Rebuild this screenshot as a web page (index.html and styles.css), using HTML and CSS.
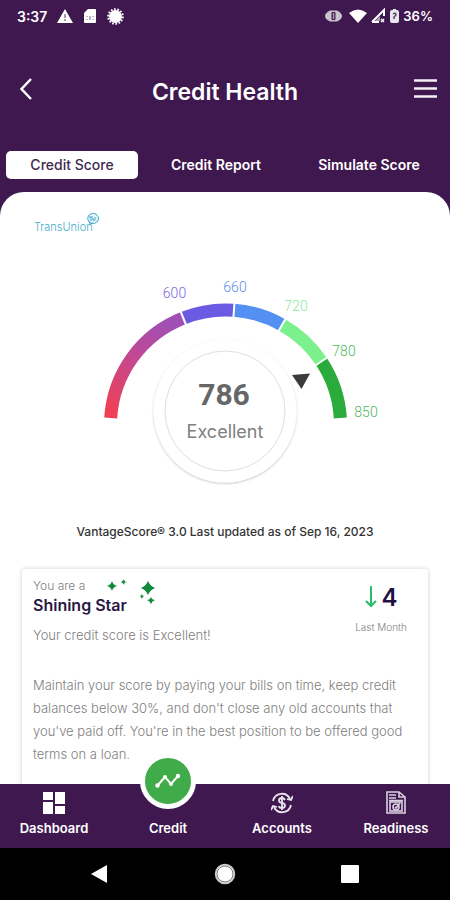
FILE: index.html
```html
<!DOCTYPE html>
<html lang="en">
<head>
    <meta charset="UTF-8">
    <meta name="viewport" content="width=device-width, initial-scale=1.0">
    <title>Credit Health</title>
    <link rel="stylesheet" href="styles.css">
</head>
<body>
    <header>
        <div class="status">
            <div class="status-group">
                <span class="time">3:37</span>
                <svg width="16" height="16" viewBox="0 0 16 16"><path d="M8 1L16 15H0Z" fill="#fff"/><path d="M8 6v4M8 11v2" stroke="#8a7a92" stroke-width="1.5"/></svg>
                <svg width="14" height="16" viewBox="0 0 14 16"><path d="M5 1h7q1 0 1 1v12q0 1-1 1H2q-1 0-1-1V5Z" fill="#fff"/><path d="M4 8v1M4 11v1M7 8v4M10 8v1M10 11v1" stroke="#7b6a86" stroke-width="1"/></svg>
                <svg width="17" height="17" viewBox="0 0 17 17"><circle cx="8.500" cy="8.500" r="6.500" fill="#fff"/><circle cx="8.500" cy="8.500" r="7.300" fill="none" stroke="#fff" stroke-width="2" stroke-dasharray="1.700 1.570"/></svg>
            </div>
            <div class="status-group right">
                <svg width="17" height="14" viewBox="0 0 17 14"><path d="M5 1.500h7v11H5Q0 10 0 7T5 1.500ZM12 1.500Q17 4 17 7T12 12.500" fill="#c9c0d0"/><rect x="6.500" y="3" width="4" height="8" rx="1" fill="#3f184f"/><rect x="7.800" y="4" width="1.500" height="6" fill="#a79bb0"/></svg>
                <svg class="wifi" width="18" height="14" viewBox="0 0 18 14"><path d="M0 4Q9-3 18 4L9 14Z" fill="#fff"/></svg>
                <svg width="16" height="16" viewBox="0 0 16 16"><path d="M2 14L14 2v6M2 14h7" fill="none" stroke="#fff" stroke-width="2"/><path d="M5 13L10 8v5Z" fill="#a79bb0"/><path d="M11 11l3 3M14 11l-3 3" stroke="#fff" stroke-width="1.500"/></svg>
                <svg width="11" height="16" viewBox="0 0 11 16"><path d="M4 1h3v1h1q2 0 2 2v9q0 2-2 2H3q-2 0-2-2V4q0-2 2-2h1Z" fill="#e9e5ec"/><path d="M4 6q3-2 3 1L5 9v2" fill="none" stroke="#5b4169" stroke-width="1.500"/></svg>
                <span class="battery">36%</span>
            </div>
        </div>
        <div class="title-bar">
            <button type="button" class="icon-btn back" aria-label="Back">
                <svg width="14" height="24" viewBox="0 0 14 24"><path d="M11 2L1.500 12L11 22" fill="none" stroke="#fff" stroke-width="2.500"/></svg>
            </button>
            <h1>Credit Health</h1>
            <button type="button" class="icon-btn" aria-label="Menu">
                <svg width="24" height="24" viewBox="0 0 24 24"><path d="M1 3.500h23M1 11.500h23M1 19.500h23" stroke="#f3f0f5" stroke-width="2.500"/></svg>
            </button>
        </div>
        <div class="tabs">
            <button type="button" class="tab active">Credit Score</button>
            <button type="button" class="tab">Credit Report</button>
            <button type="button" class="tab">Simulate Score</button>
        </div>
    </header>

    <main>
        <div class="logo">
            <span>TransUnion</span>
            <svg width="14" height="14" viewBox="0 0 14 14"><path d="M3 3Q6 0 10 2Q14 5 12 9Q9 13 4 11Q0 7 3 3Z" fill="#e4f4fa" stroke="#48aacd" stroke-width="1"/><path d="M3 5h4M5 5v4M7 6v2q1 1 2 0V5M3 9l1 3l3-1" fill="none" stroke="#48aacd" stroke-width="1"/></svg>
        </div>

        <svg class="gauge" width="300" height="220" viewBox="75 0 300 220">
            <defs>
                <linearGradient id="low" gradientUnits="userSpaceOnUse" x1="110" y1="148" x2="160" y2="50">
                    <stop offset="0" stop-color="#f43f50"/>
                    <stop offset="0.700" stop-color="#b94a9c"/>
                    <stop offset="1" stop-color="#a04fb4"/>
                </linearGradient>
                <filter id="soft" x="-20%" y="-20%" width="140%" height="140%">
                    <feDropShadow dx="0" dy="1" stdDeviation="1" flood-color="#000" flood-opacity="0.250"/>
                </filter>
            </defs>
            <g fill="none" stroke-width="13">
                <path d="M110.700 148A115 115 0 0 1 183.200 48.100" stroke="url(#low)"/>
                <path d="M183.200 48.100A115 115 0 0 1 233.900 40.300" stroke="#6a5be2"/>
                <path d="M233.900 40.300A115 115 0 0 1 282 54.800" stroke="#548ff2"/>
                <path d="M282 54.800A115 115 0 0 1 321.400 91.500" stroke="#7cf08c"/>
                <path d="M321.400 91.500A115 115 0 0 1 340.300 148" stroke="#2bab3c"/>
            </g>
            <path d="M180 40L186.500 56M234.500 32L233.400 48M286 48L278 62M328 87L314.500 96" stroke="#fff" stroke-width="2"/>
            <circle cx="225" cy="141" r="71.500" fill="#fff" filter="url(#soft)"/>
            <circle cx="225" cy="141" r="60" fill="#fff" stroke="#dedede"/>
            <path d="M292 105L310 103.500L301.500 119Z" fill="#3b3b3b"/>
            <g class="ticks" text-anchor="middle">
                <text x="174.500" y="28" fill="#7a68da">600</text>
                <text x="235" y="22" fill="#5b8deb">660</text>
                <text x="296" y="41" fill="#8bea99">720</text>
                <text x="344" y="86" fill="#4fb65e">780</text>
                <text x="366" y="147" fill="#4fb65e">850</text>
            </g>
            <text class="score" x="224" y="135" text-anchor="middle">786</text>
            <text class="rating" x="225" y="168" text-anchor="middle">Excellent</text>
        </svg>

        <p class="updated">VantageScore® 3.0 Last updated as of Sep 16, 2023</p>

        <section class="card">
            <div class="card-head">
                <div class="persona">
                    <p class="small">You are a</p>
                    <h2>Shining Star</h2>
                    <svg class="sparkles" width="48" height="26" viewBox="0 0 48 26" fill="#128a3c">
                        <path d="M5 2Q6 6 10 7Q6 8 5 12Q4 8 0 7Q4 6 5 2Z"/>
                        <path d="M17 0Q17 3 20 3Q17 3 17 6Q16 4 14 3Q16 2 17 0Z"/>
                        <path d="M41 2Q43 7 48 9Q43 11 41 16Q39 11 34 9Q39 7 41 2Z"/>
                        <path d="M35 15Q35 17 37 17Q35 18 35 20Q34 18 33 17Q34 17 35 15Z"/>
                        <path d="M44 18Q45 21 48 21Q45 22 44 25Q43 22 40 21Q43 21 44 18Z"/>
                    </svg>
                </div>
                <div class="change">
                    <div class="change-value">
                        <svg width="12" height="22" viewBox="0 0 12 22"><path d="M6 0v20M1 15l5 5l5-5" fill="none" stroke="#2dba6c" stroke-width="2"/></svg>
                        <span>4</span>
                    </div>
                    <p class="last">Last Month</p>
                </div>
            </div>
            <p class="text">Your credit score is Excellent!</p>
            <p class="text advice">Maintain your score by paying your bills on time, keep credit balances below 30%, and don't close any old accounts that you've paid off. You're in the best position to be offered good terms on a loan.</p>
        </section>
    </main>

    <nav>
        <a href="#dashboard">
            <svg width="22" height="22" viewBox="0 0 22 22"><path d="M0 0h10v8H0ZM12 0h10v12H12ZM0 10h10v12H0ZM12 14h10v8H12Z" fill="#fff"/></svg>
            <span>Dashboard</span>
        </a>
        <a href="#credit">
            <span class="bubble"><svg width="26" height="16" viewBox="0 0 26 16"><path d="M2 13L10 4L16 11L23 3" fill="none" stroke="#fff" stroke-width="2"/><g fill="#fff"><circle cx="2.500" cy="12.500" r="2.200"/><circle cx="10" cy="4" r="2"/><circle cx="16" cy="11" r="2"/><circle cx="23" cy="3" r="2.200"/></g></svg></span>
            <span>Credit</span>
        </a>
        <a href="#accounts">
            <svg width="22" height="22" viewBox="0 0 22 22" fill="none" stroke="#e9e4ee" stroke-width="1.800"><path d="M2 9A9 9 0 0 1 19 7M20 13A9 9 0 0 1 3 15"/><path d="M16 7l4 1l2-4M6 15l-4-1l-2 4"/><path d="M14 8Q13 6 11 6Q8 6 8 8.500Q8 10.500 11 11Q14 11.500 14 13.500Q14 16 11 16Q8 16 8 14M11 4v14"/></svg>
            <span>Accounts</span>
        </a>
        <a href="#readiness">
            <svg width="20" height="23" viewBox="0 0 20 23" fill="none" stroke="#d9d1e0" stroke-width="1.600"><path d="M1 1h12l6 5v16H1Z"/><path d="M13 1v5h6M3 4h7M3 7h7M3 9.500h14"/><rect x="4" y="11" width="12" height="9"/><circle cx="10" cy="16" r="3"/><path d="M9 16l1 1l4-5"/></svg>
            <span>Readiness</span>
        </a>
    </nav>

    <div class="system">
        <button type="button" aria-label="System back"><svg width="22" height="22" viewBox="0 0 22 22"><path d="M2 11L18 2V20Z" fill="#fff"/></svg></button>
        <button type="button" aria-label="Home"><svg width="22" height="22" viewBox="0 0 22 22"><circle cx="11" cy="11" r="9.500" fill="#fff" stroke="#c9c9c9" stroke-width="1.500"/><circle cx="11" cy="11" r="8" fill="none" stroke="#777" stroke-width="1"/></svg></button>
        <button type="button" aria-label="Recent apps"><svg width="22" height="22" viewBox="0 0 22 22"><rect x="2" y="2" width="18" height="18" rx="1" fill="#fff"/></svg></button>
    </div>
</body>
</html>
```
FILE: styles.css
```css
* {
    box-sizing: border-box;
}

body {
    margin: 0;
    height: 100vh;
    display: flex;
    flex-direction: column;
    background-color: #3f184f;
    font-family: Inter, "Liberation Sans", sans-serif;
    color: #808080;
}

h1, h2, p {
    margin: 0;
}

button {
    border: none;
    padding: 0;
    background: none;
    font-family: inherit;
    color: inherit;
}

svg {
    display: block;
    flex-shrink: 0;
}

header {
    color: #fff;
}

.status {
    display: flex;
    justify-content: space-between;
    align-items: center;
    height: 32px;
    padding: 0 17px;
}

.status-group {
    display: flex;
    align-items: center;
    gap: 10px;
}

.status-group.right {
    gap: 3px;
}

.wifi {
    margin-left: 4px;
}

.time, .battery {
    font-size: 14px;
    font-weight: 600;
}

.battery {
    font-size: 13px;
}

.title-bar {
    display: flex;
    justify-content: space-between;
    align-items: center;
    height: 119px;
    padding: 0 13px;
}

.title-bar h1 {
    font-size: 23px;
    font-weight: 600;
}

.icon-btn {
    display: flex;
    width: 24px;
    padding-bottom: 5px;
}

.back {
    padding-left: 7px;
}

.tabs {
    display: grid;
    grid-template-columns: 22fr 26fr 25fr;
    padding: 0 6px;
}

.tab {
    height: 28px;
    padding-bottom: 2px;
    border-radius: 5px;
    font-size: 14px;
    font-weight: 600;
}

.tab.active {
    background-color: #fff;
    color: #3f2a4f;
    font-weight: 500;
}

main {
    flex: 1;
    min-height: 0;
    overflow: hidden;
    margin-top: 13px;
    padding: 20px 22px 0;
    background-color: #fff;
    border-radius: 24px 24px 0 0;
}

.logo {
    display: flex;
    padding-left: 12px;
    height: 58px;
    color: #48aacd;
    font-size: 11px;
    font-weight: 300;
}

.logo span {
    padding-top: 8px;
}

.logo svg {
    margin-left: -7px;
}

.gauge {
    margin: 0 auto;
    overflow: visible;
}

.ticks {
    font-family: Roboto, sans-serif;
    font-size: 14px;
    font-weight: 300;
}

.score {
    font-family: Roboto, sans-serif;
    font-size: 30px;
    font-weight: 700;
    fill: #666;
}

.rating {
    font-size: 18px;
    fill: #808080;
}

.updated {
    margin: 32px 0 27px;
    text-align: center;
    color: #333;
    font-size: 12px;
    line-height: 20px;
    font-weight: 500;
}

.card {
    min-height: 240px;
    padding: 8px 11px;
    border-radius: 3px;
    box-shadow: 0 0 4px rgba(0, 0, 0, 0.2);
}

.card-head {
    display: flex;
    justify-content: space-between;
    height: 47px;
}

.persona {
    position: relative;
}

.persona h2 {
    color: #2a1745;
    font-size: 16px;
    line-height: 20px;
    font-weight: 600;
}

.small {
    font-size: 12px;
    line-height: 18px;
    font-weight: 300;
}

.sparkles {
    position: absolute;
    left: 74px;
    top: 2px;
}

.change {
    padding: 4px 10px 0 0;
    text-align: center;
}

.change-value {
    display: flex;
    align-items: center;
    justify-content: center;
    gap: 5px;
    height: 32px;
    color: #1f1240;
    font-size: 24px;
    font-weight: 600;
}

.last {
    margin-top: 6px;
    font-size: 10px;
    line-height: 16px;
    font-weight: 300;
}

.text {
    font-size: 13px;
    line-height: 23px;
    font-weight: 300;
}

.advice {
    margin-top: 27px;
}

nav {
    position: relative;
    display: flex;
    justify-content: space-between;
    height: 64px;
    padding: 0 10px;
    background-color: #3f184f;
}

nav a {
    display: flex;
    flex-direction: column;
    align-items: center;
    justify-content: flex-end;
    gap: 6px;
    width: 88px;
    padding-bottom: 12px;
    color: #fff;
    font-size: 13px;
    line-height: 16px;
    font-weight: 600;
    text-decoration: none;
}

.bubble {
    display: flex;
    align-items: center;
    justify-content: center;
    width: 56px;
    height: 56px;
    border: 5px solid #fff;
    border-radius: 50%;
    background-color: #3fab49;
    flex-shrink: 0;
    margin-bottom: 5px;
}

.system {
    display: flex;
    align-items: center;
    justify-content: center;
    gap: 103px;
    height: 52px;
    background-color: #000;
}
```
